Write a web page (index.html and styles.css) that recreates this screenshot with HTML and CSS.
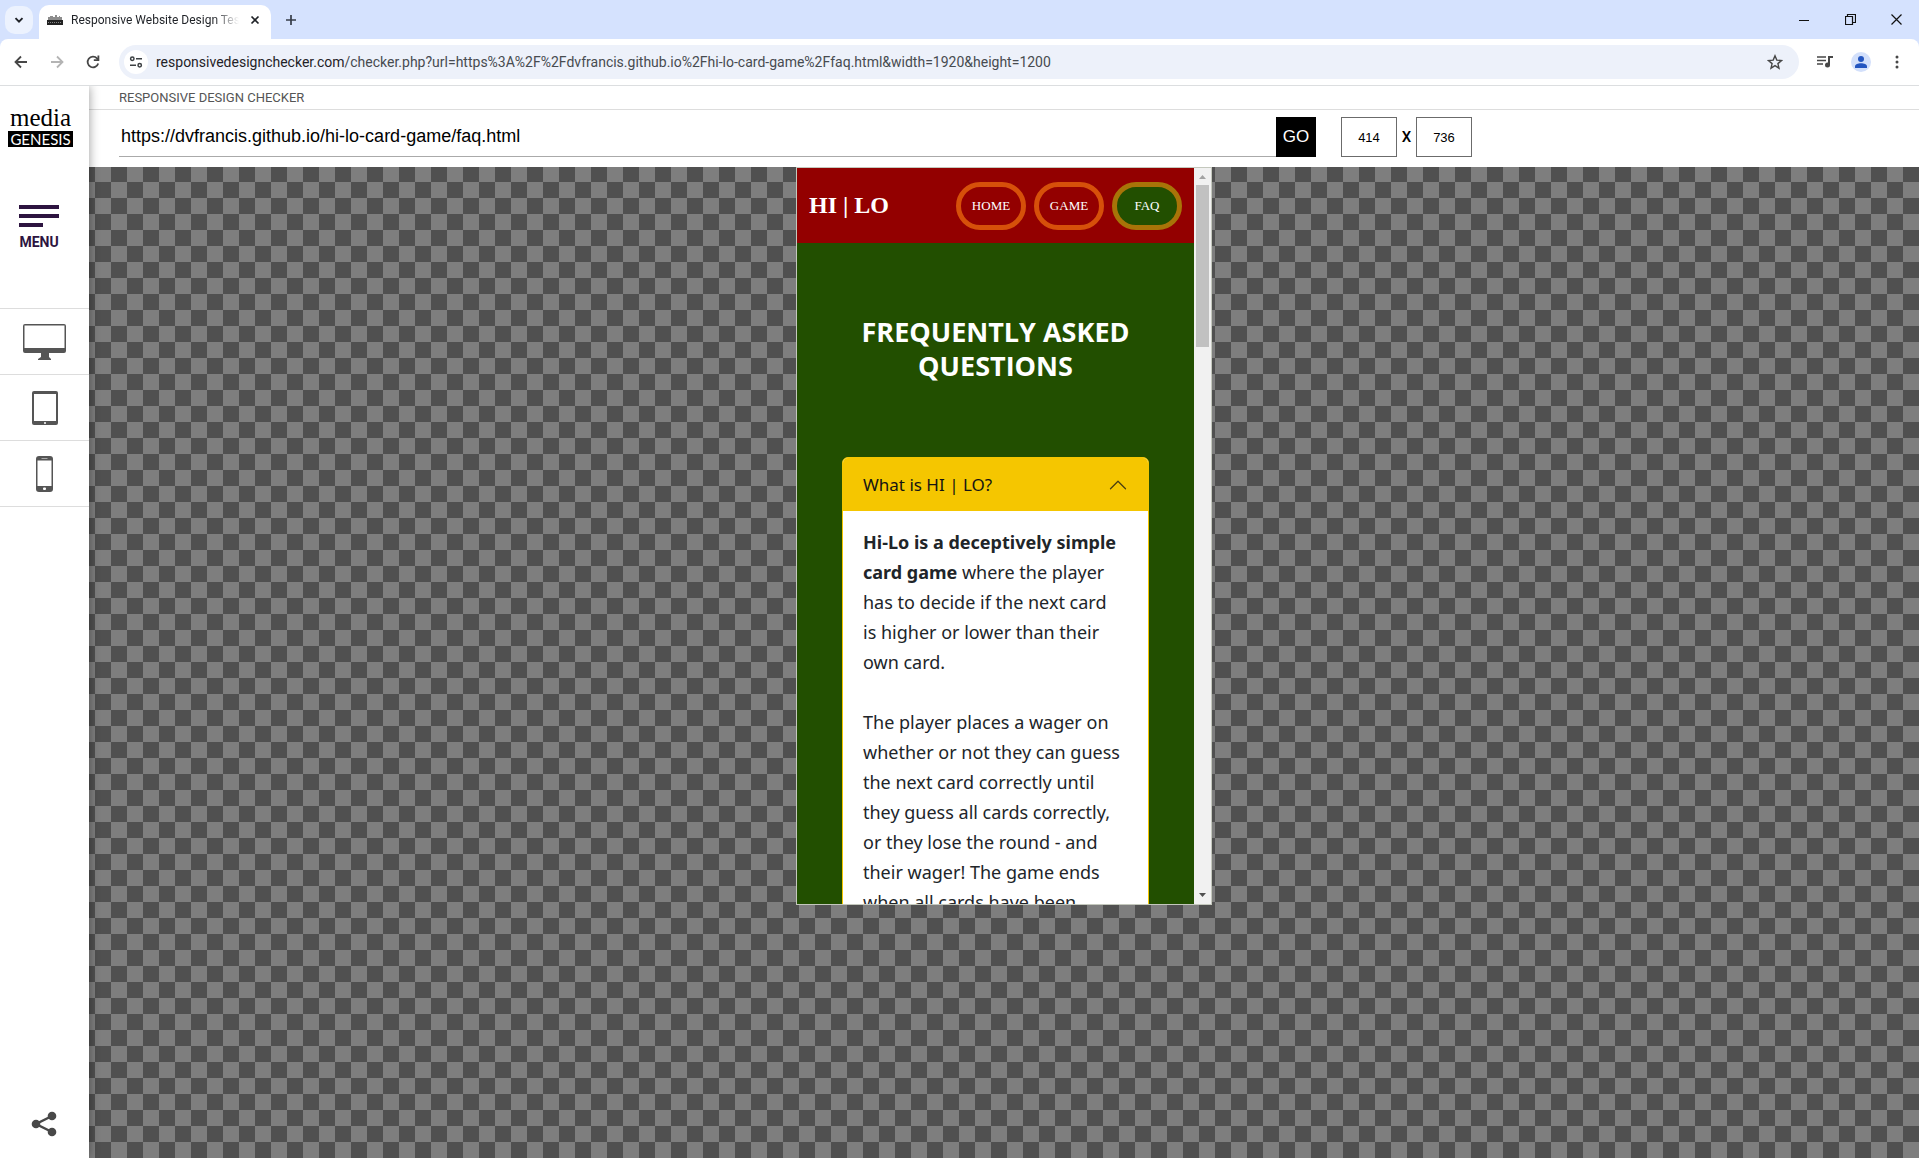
FILE: index.html
```html
<!DOCTYPE html>
<html lang="en">
<head>
<meta charset="utf-8">
<meta name="viewport" content="width=device-width, initial-scale=1">
<title>Responsive Website Design Tester</title>
<link rel="stylesheet" href="styles.css">
</head>
<body>
<header class="browser">
  <div class="tabstrip">
    <button class="tab-search" aria-label="Search tabs"><svg width="10" height="10" viewBox="0 0 10 10"><path d="M1.500 3.200 5 6.700 8.500 3.200" fill="none" stroke="#1f2227" stroke-width="1.900"/></svg></button>
    <div class="tab">
      <svg class="favicon" width="16" height="16" viewBox="0 0 16 16"><path d="M1 8V5h2V4h3v1h2V3h2v2h2V4h1v1h2v3z" fill="#8c8c8c"/><path d="M0 8h16v5H0z" fill="#222"/><path d="M1 10.500h14" stroke="#888" stroke-dasharray="1 1"/></svg>
      <span class="tab-title">Responsive Website Design Test</span>
      <button class="tab-close" aria-label="Close tab"><svg width="10" height="10" viewBox="0 0 10 10"><path d="M1.500 1.500l7 7M8.500 1.500l-7 7" stroke="#1f2227" stroke-width="1.700"/></svg></button>
    </div>
    <button class="icon-btn new-tab" aria-label="New tab"><svg width="12" height="12" viewBox="0 0 12 12"><path d="M6 1v10M1 6h10" stroke="#363c48" stroke-width="1.700"/></svg></button>
    <div class="window-controls">
      <button class="icon-btn" aria-label="Minimize"><svg width="10" height="10" viewBox="0 0 10 10"><path d="M0 5.500h10" stroke="#111"/></svg></button>
      <button class="icon-btn" aria-label="Restore"><svg width="11" height="11" viewBox="0 0 11 11"><path d="M.5 2.500h7v8h-7zM2.500 2.500v-2h8v8h-3" fill="none" stroke="#111" stroke-width="1.200"/></svg></button>
      <button class="icon-btn" aria-label="Close"><svg width="11" height="11" viewBox="0 0 11 11"><path d="M.5.5l10 10M10.500.5l-10 10" stroke="#111" stroke-width="1.200"/></svg></button>
    </div>
  </div>
  <div class="toolbar">
    <button class="icon-btn" aria-label="Back"><svg width="16" height="16" viewBox="0 0 16 16"><path d="M14 8H3M8 2.500 2.500 8 8 13.500" fill="none" stroke="#474747" stroke-width="1.800"/></svg></button>
    <button class="icon-btn" aria-label="Forward"><svg width="16" height="16" viewBox="0 0 16 16"><path d="M2 8h11M8 2.500 13.500 8 8 13.500" fill="none" stroke="#b4b4b4" stroke-width="1.800"/></svg></button>
    <button class="icon-btn" aria-label="Reload"><svg width="16" height="16" viewBox="0 0 16 16"><path d="M13.200 9.500A5.400 5.400 0 1 1 12 4.300L13.500 6" fill="none" stroke="#474747" stroke-width="1.800"/><path d="M14.300 1.500v5.500H8.800V5.300h3.700V1.500z" fill="#474747"/></svg></button>
    <div class="omnibox">
      <button class="site-info" aria-label="Site information"><svg width="14" height="14" viewBox="0 0 14 14" fill="none" stroke="#3c4043" stroke-width="1.500"><circle cx="3.300" cy="3.800" r="1.700"/><path d="M7 3.800h6M1 10.200h6"/><circle cx="10.700" cy="10.200" r="1.700"/></svg></button>
      <p class="address"><span class="host">responsivedesignchecker.com</span>/checker.php?url=https%3A%2F%2Fdvfrancis.github.io%2Fhi-lo-card-game%2Ffaq.html&amp;width=1920&amp;height=1200</p>
      <button class="icon-btn" aria-label="Bookmark"><svg width="16" height="16" viewBox="0 0 16 16"><path d="M8 1.800l1.800 4.300 4.700.4-3.600 3.100 1.100 4.600L8 11.700l-4 2.500 1.100-4.600L1.500 6.500l4.700-.4z" fill="none" stroke="#474747" stroke-width="1.400"/></svg></button>
    </div>
    <button class="icon-btn" aria-label="Media controls"><svg width="16" height="14" viewBox="0 0 16 14"><path d="M0 2h9M0 5.500h9M0 9h6" stroke="#474747" stroke-width="1.500"/><path d="M11 1h5v2h-3v7h-2z" fill="#474747"/><circle cx="10.500" cy="10" r="2.500" fill="#474747"/></svg></button>
    <button class="icon-btn profile" aria-label="Profile"><svg width="20" height="20" viewBox="0 0 20 20"><circle cx="10" cy="10" r="10" fill="#d3e0fb"/><circle cx="10" cy="7" r="3" fill="#2456c0"/><path d="M4 16v-1.500C4 12.500 7 11.300 10 11.300s6 1.200 6 3.200V16z" fill="#2456c0"/></svg></button>
    <button class="icon-btn" aria-label="More"><svg width="4" height="14" viewBox="0 0 4 14" fill="#474747"><circle cx="2" cy="2" r="1.500"/><circle cx="2" cy="7" r="1.500"/><circle cx="2" cy="12" r="1.500"/></svg></button>
  </div>
</header>
<div class="page">
  <aside class="sidebar">
    <a class="brand" href="#"><span class="brand-top">media</span><span class="brand-bottom">GENESIS</span></a>
    <button class="menu"><svg width="40" height="22" viewBox="0 0 40 22" fill="#2d1440"><path d="M0 0h40v4H0zM0 9h40v4H0zM0 18h24v4H0z"/></svg>MENU</button>
    <nav class="devices" aria-label="Devices">
      <a href="#" aria-label="Desktop"><svg width="44" height="36" viewBox="0 0 44 36"><path fill-rule="evenodd" d="M2 0h39q2 0 2 2v25q0 2-2 2H26v4l2 2v1H15v-1l3-2v-4H2q-2 0-2-2V2q0-2 2-2zM1.500 1.500V24h40V1.500z" fill="#555"/></svg></a>
      <a href="#" aria-label="Tablet"><svg width="26" height="34" viewBox="0 0 26 34"><rect width="26" height="34" rx="2" fill="#555"/><path d="M2 3h22v27H2z" fill="#fff"/><circle cx="13" cy="32" r="1" fill="#fff"/></svg></a>
      <a href="#" aria-label="Phone"><svg width="17" height="36" viewBox="0 0 17 36"><rect width="17" height="36" rx="3" fill="#555"/><path d="M1.500 4.500h14V30h-14z" fill="#fff"/><path d="M5.500 2.500h6" stroke="#aaa"/><rect x="7" y="31.500" width="3" height="2.500" rx="1" fill="#fff"/></svg></a>
    </nav>
    <a class="share" href="#" aria-label="Share"><svg width="26" height="26" viewBox="0 0 26 26" fill="#484848"><path d="M21 5 5 13l16 8" fill="none" stroke="#484848" stroke-width="2.500"/><circle cx="5" cy="13" r="4.300"/><circle cx="21" cy="5" r="4.300"/><circle cx="21" cy="21" r="4.300"/></svg></a>
  </aside>
  <main class="checker">
    <h1 class="checker-title">RESPONSIVE DESIGN CHECKER</h1>
    <form class="controls">
      <input class="url" type="text" aria-label="Website URL" value="https://dvfrancis.github.io/hi-lo-card-game/faq.html">
      <button class="go" type="button">GO</button>
      <input class="size" type="text" aria-label="Width" value="414">
      <span class="times">X</span>
      <input class="size" type="text" aria-label="Height" value="736">
    </form>
    <div class="stage">
      <section class="device">
        <div class="site">
          <header class="site-header">
            <a class="logo" href="#">HI | LO</a>
            <nav class="pills"><a href="#">HOME</a><a href="#">GAME</a><a class="active" href="#">FAQ</a></nav>
          </header>
          <h2 class="site-title">FREQUENTLY ASKED QUESTIONS</h2>
          <div class="accordion">
            <button class="question">What is HI | LO?<svg width="20" height="20" viewBox="0 0 16 16"><path d="M2 11l6-6 6 6" fill="none" stroke="#4a3f10" stroke-linecap="round" stroke-linejoin="round"/></svg></button>
            <div class="answer">
              <p><strong>Hi-Lo is a deceptively simple card game</strong> where the player has to decide if the next card is higher or lower than their own card.</p>
              <p>The player places a wager on whether or not they can guess the next card correctly until they guess all cards correctly, or they lose the round - and their wager! The game ends when all cards have been</p>
            </div>
          </div>
        </div>
        <div class="scrollbar" aria-hidden="true">
          <svg width="17" height="17" viewBox="0 0 17 17"><path d="M5 11l3.500-4 3.500 4z" fill="#a3a3a3"/></svg>
          <div class="thumb"></div>
          <svg width="17" height="17" viewBox="0 0 17 17"><path d="M5 6l3.500 4L12 6z" fill="#505050"/></svg>
        </div>
      </section>
    </div>
  </main>
</div>
</body>
</html>
```
FILE: styles.css
```css
* { box-sizing: border-box; }

body {
  margin: 0;
  height: 100vh;
  display: flex;
  flex-direction: column;
  font-family: Roboto, "Liberation Sans", sans-serif;
  background: #fff;
}

h1, h2, p { margin: 0; font-weight: 400; }
a { color: inherit; text-decoration: none; }
button { border: 0; padding: 0; background: none; font: inherit; color: inherit; cursor: pointer; }
svg { display: block; flex: none; }

/* Browser window */
.browser { flex: none; background: #d5e2fe; font-family: Roboto, sans-serif; }
.tabstrip { display: flex; align-items: center; height: 39px; padding-left: 5px; }
.tab-search { display: grid; place-items: center; width: 28px; height: 28px; border-radius: 10px; background: #ecf2fe; }
.tab {
  display: flex;
  align-items: center;
  align-self: flex-end;
  width: 232px;
  height: 34px;
  margin-left: 6px;
  padding: 0 6px 4px 8px;
  border-radius: 10px 10px 0 0;
  background: #fff;
}
.tab-title {
  flex: 1;
  margin-left: 8px;
  overflow: hidden;
  white-space: nowrap;
  font-size: 12px;
  color: #1f2227;
  mask-image: linear-gradient(90deg, #000 85%, transparent);
}
.tab-close { display: grid; place-items: center; width: 20px; height: 20px; margin-left: 6px; }
.icon-btn { display: grid; place-items: center; flex: none; width: 36px; height: 32px; }
.new-tab { margin-left: 2px; }
.window-controls { display: flex; margin-left: auto; }
.window-controls .icon-btn { width: 46px; }
.toolbar {
  display: flex;
  align-items: center;
  height: 47px;
  padding: 0 4px 0 3px;
  border-bottom: 1px solid #dcdee0;
  border-radius: 8px 8px 0 0;
  background: #fff;
}
.omnibox {
  display: flex;
  align-items: center;
  flex: 1;
  min-width: 0;
  height: 34px;
  margin: 0 8px;
  padding: 0 6px 0 5px;
  border-radius: 17px;
  background: #edf1fa;
}
.site-info { display: grid; place-items: center; flex: none; width: 24px; height: 24px; border-radius: 12px; background: #fff; }
.address { flex: 1; min-width: 0; margin-left: 8px; overflow: hidden; white-space: nowrap; font-size: 14px; color: #474b50; }
.host { color: #1f2227; }

/* Checker page */
.page { display: flex; flex: 1; min-height: 0; overflow: hidden; }
.sidebar {
  position: relative;
  display: flex;
  flex-direction: column;
  flex: none;
  width: 89px;
  background: #fff;
  box-shadow: 0 0 10px rgba(0, 0, 0, .4);
}
.brand { display: flex; flex-direction: column; align-items: center; width: 65px; margin: 19px 0 0 8px; font-family: "Liberation Serif", serif; color: #000; }
.brand-top { font-size: 25px; line-height: 26px; }
.brand-bottom { width: 65px; height: 16px; background: #000; color: #fff; font-family: Lato, sans-serif; font-size: 15px; line-height: 16px; text-align: center; }
.menu { display: flex; flex-direction: column; gap: 6px; width: 40px; margin: 58px 0 0 19px; font-size: 14px; line-height: 18px; font-weight: 700; color: #2d1440; }
.devices { margin-top: 57px; border-top: 1px solid #ddd; }
.devices a { display: grid; place-items: center; height: 66px; border-bottom: 1px solid #ddd; }
.share { margin: auto auto 21px 31px; }

.checker { display: flex; flex-direction: column; flex: 1; min-width: 0; }
.checker-title { height: 24px; padding-left: 30px; border-bottom: 1px solid #ddd; font-size: 13px; line-height: 24px; color: #555; }
.controls { display: flex; align-items: center; height: 57px; padding: 0 447px 3px 30px; font-family: "Liberation Sans", sans-serif; }
.controls input { height: 40px; font-family: inherit; color: #000; background: #fff; }
.url { flex: 1; min-width: 0; padding: 0 2px; border: 0; border-bottom: 1px solid #aaa; font-size: 18px; }
.go { width: 40px; height: 40px; margin-right: 25px; background: #000; color: #fff; font-size: 17px; }
.size { width: 56px; padding: 0; border: 1px solid #6b6b6b; text-align: center; font-size: 13px; }
.times { width: 19px; text-align: center; font-family: Roboto, sans-serif; font-size: 15px; font-weight: 500; }
.stage {
  display: flex;
  justify-content: center;
  align-items: flex-start;
  flex: 1;
  min-height: 0;
  background: conic-gradient(#505050 25%, #7e7e7e 0 50%, #505050 0 75%, #7e7e7e 0) 6px -1px / 32px 32px;
}

/* Previewed device, 414 by 736 inside its border */
.device { display: flex; width: 416px; height: 738px; border: 1px solid #c4c8bd; overflow: hidden; }
.site { flex: 1; min-width: 0; overflow: hidden; background: #224f00; color: #fff; }
.site-header { display: flex; align-items: center; justify-content: space-between; height: 75px; padding: 0 12px; background: #930000; font-family: "Liberation Serif", serif; }
.logo { font-size: 24px; font-weight: 700; }
.pills { display: flex; gap: 8px; }
.pills a { display: grid; place-items: center; width: 70px; height: 48px; border: 5px solid #d6500a; border-radius: 24px; font-size: 13px; }
.pills .active { border-color: #a87408; background: #224f00; }
.site-title { padding: 72px 46px 74px; text-align: center; font-family: "Open Sans", sans-serif; font-size: 27px; line-height: 34px; font-weight: 700; }
.accordion { margin: 0 45px; border: 1px solid #f5c600; border-radius: 6px 6px 0 0; background: #fff; overflow: hidden; font-family: "Noto Sans", sans-serif; }
.question { display: flex; align-items: center; justify-content: space-between; width: 100%; height: 53px; padding: 0 20px; background: #f5c600; color: #141414; font-size: 17px; }
.answer { padding: 16px 24px 16px 20px; font-size: 18px; line-height: 30px; color: #212529; }
.answer p + p { margin-top: 30px; }
.scrollbar { display: flex; flex-direction: column; width: 17px; background: #f1f1f1; }
.thumb { width: 13px; height: 162px; margin: 0 2px auto; background: #c1c1c1; }
```
